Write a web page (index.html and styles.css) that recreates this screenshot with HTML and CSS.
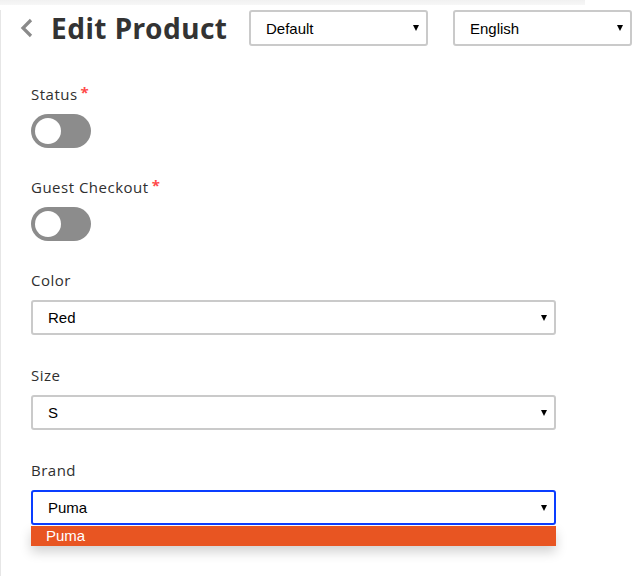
FILE: index.html
```html
<!DOCTYPE html>
<html lang="en">
<head>
<meta charset="utf-8">
<title>Edit Product</title>
<link rel="stylesheet" href="styles.css">
</head>
<body>
<div class="topband"></div>
<div class="page">
  <header class="header">
    <a class="back" href="#" aria-label="Back">
      <svg width="14" height="20" viewBox="0 0 14 20"><path d="M11 2 L3 10 L11 18" fill="none" stroke="#8a8a8a" stroke-width="3.2"/></svg>
    </a>
    <h1 class="title">Edit Product</h1>
    <div class="select select-sm"><span>Default</span><i class="caret"></i></div>
    <div class="select select-sm select-lang"><span>English</span><i class="caret"></i></div>
  </header>

  <form class="form">
    <div class="group group-toggle">
      <label class="label">Status<span class="req">*</span></label>
      <div class="toggle"><span class="knob"></span></div>
    </div>
    <div class="group group-toggle">
      <label class="label">Guest Checkout<span class="req">*</span></label>
      <div class="toggle"><span class="knob"></span></div>
    </div>
    <div class="group">
      <label class="label">Color</label>
      <div class="select select-wide"><span>Red</span><i class="caret"></i></div>
    </div>
    <div class="group">
      <label class="label">Size</label>
      <div class="select select-wide"><span>S</span><i class="caret"></i></div>
    </div>
    <div class="group group-last">
      <label class="label">Brand</label>
      <div class="dropdown">
        <div class="select select-wide select-focus"><span>Puma</span><i class="caret"></i></div>
        <ul class="menu"><li class="option active">Puma</li></ul>
      </div>
    </div>
  </form>
  <div class="footer-line"></div>
</div>
</body>
</html>
```
FILE: styles.css
```css
* { box-sizing: border-box; }
html, body { margin: 0; padding: 0; background: #fff; }
body { width: 642px; height: 576px; overflow: hidden; font-family: "Open Sans", "Liberation Sans", sans-serif; color: #333; }

.topband { height: 5px; background: linear-gradient(#f1f1f1, #f7f7f7); margin-right: 57px; }

.page { border-left: 1px solid #e6e6e6; height: 571px; position: relative; }

.header { display: flex; align-items: center; height: 36px; margin-top: 5px; padding-left: 19px; }
.back { display: flex; align-items: center; width: 31px; height: 36px; }
.title { margin: 0; width: 198px; font-family: "Noto Sans", "Open Sans", sans-serif; font-size: 28px; font-weight: 700; letter-spacing: 0.5px; color: #333; line-height: 36px; white-space: nowrap; }

.select { position: relative; display: flex; align-items: center; height: 35px; border: 2px solid #cacaca; border-radius: 3px; background: #fff; font-family: "Liberation Sans", Arial, sans-serif; font-size: 15px; color: #000; padding-left: 15px; }
.select-sm { width: 179px; height: 36px; }
.select-lang { margin-left: 25px; }
.select-wide { width: 525px; }
.select-focus { border-color: #0a3dff; }
.caret { position: absolute; right: 7px; top: 50%; margin-top: -3px; width: 0; height: 0; border-left: 3.5px solid transparent; border-right: 3.5px solid transparent; border-top: 6px solid #000; }

.form { padding: 39px 0 0 30px; }
.group { margin-bottom: 31px; }
.group-toggle { margin-bottom: 30px; }
.group-last { margin-bottom: 0; }
.label { display: block; font-size: 15px; letter-spacing: 0.5px; line-height: 18px; height: 18px; margin-bottom: 11px; color: #2f2f2f; }
.req { color: #ff4a4a; font-weight: 700; margin-left: 3px; position: relative; top: -2px; }

.toggle { position: relative; width: 60px; height: 34px; border-radius: 17px; background: #8c8c8c; }
.knob { position: absolute; left: 4px; top: 4px; width: 26px; height: 26px; border-radius: 50%; background: #fff; }

.dropdown { position: relative; width: 525px; }
.menu { list-style: none; margin: 1px 0 0; padding: 0; width: 525px; box-shadow: 0 6px 12px rgba(0,0,0,0.18); }
.option { height: 20px; line-height: 20px; padding-left: 15px; font-family: "Liberation Sans", Arial, sans-serif; font-size: 15px; color: #fff; background: #e85522; }

.footer-line { position: absolute; left: 15px; right: 0; bottom: 0; height: 2px; background: #e8e8e8; }
```
